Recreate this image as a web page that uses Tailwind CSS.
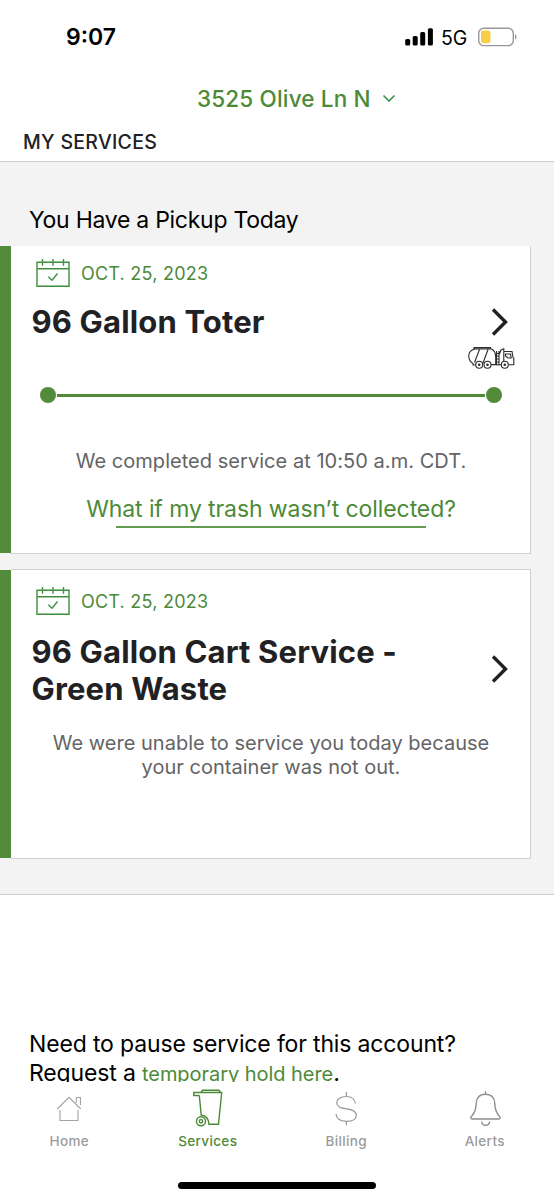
<!DOCTYPE html>
<html lang="en">
<head>
<meta charset="utf-8">
<title>My Services</title>
<script src="https://cdn.jsdelivr.net/npm/@tailwindcss/browser@4"></script>
</head>
<body class="bg-white font-['Inter','Roboto',sans-serif] text-black">
<svg class="hidden">
  <symbol id="calendar" viewBox="0 0 34 30">
    <g fill="none" stroke="#3f8f3f" stroke-width="1.4">
      <path d="M1 4.2H33V28.2H1ZM1 10.7H33M6.500 1V7.800M17 1V7.800M27.500 1V7.800"/>
      <path d="M12.300 18.800L16 22.300L21.500 15.500"/>
    </g>
  </symbol>
  <symbol id="chevron" viewBox="0 0 18 28">
    <path d="M2 1.500L14.500 14L2 26.500" fill="none" stroke="#212123" stroke-width="3.400"/>
  </symbol>
</svg>
<div class="flex h-[1200px] w-[554px] flex-col overflow-hidden">
  <header class="h-[162px] shrink-0 border-b border-[#cbccce]">
    <div class="flex h-[74px] items-center pl-[66px]">
      <span class="w-[339px] text-[23px] leading-[28px] font-semibold">9:07</span>
      <svg class="h-[18px] w-[28px]" viewBox="0 0 28 18"><rect x="0.200" y="11" width="5" height="6.500" rx="1.500"/><rect x="7.700" y="8" width="5" height="9.500" rx="1.500"/><rect x="15.200" y="4" width="5" height="13.500" rx="1.500"/><rect x="22.900" y="0.300" width="5" height="17.200" rx="1.500"/></svg>
      <span class="ml-[8px] w-[37px] pt-px text-[19.500px] leading-[28px]">5G</span>
      <svg class="h-[20px] w-[40px]" viewBox="0 0 40 20"><rect x="0.700" y="1.200" width="34.600" height="17.400" rx="5" fill="none" stroke="#98989c" stroke-width="1.400"/><rect x="3" y="3.500" width="9.500" height="12.800" rx="2.800" fill="#f7ce46"/><path d="M37 7.200C39 7.800 39 12 37 12.600Z" fill="#98989c"/></svg>
    </div>
    <div class="flex h-[49px] items-center pl-[197px] text-[22.500px] font-medium tracking-[0.16px] text-[#4c8a38]">
      <span>3525 Olive Ln N</span>
      <svg class="ml-[11px] h-[9px] w-[14px]" viewBox="0 0 14 9"><path d="M1.500 1.500L7 7L12.500 1.500" fill="none" stroke="#43924b" stroke-width="1.700"/></svg>
    </div>
    <h1 class="pt-[5px] pl-[23px] text-[19.500px] leading-[28px] font-medium tracking-[0.28px] text-[#212123]">MY SERVICES</h1>
  </header>

  <main class="h-[733px] shrink-0 border-b border-[#cbccce] bg-[#f3f3f3]">
    <h2 class="h-[84px] pt-[42px] pl-[29px] text-[23px] leading-[32px] tracking-[-0.27px]">You Have a Pickup Today</h2>
    <section class="flex h-[308px] w-[531px]">
      <div class="h-[307px] w-[11px] bg-[#538b3b]"></div>
      <div class="relative flex-1 border-r border-b border-[#cfd0d2] bg-white">
        <div class="flex h-[54px] items-center pl-[25px] text-[18px] tracking-[0.23px] text-[#4c8a38]">
          <svg class="mr-[11px] h-[30px] w-[34px]"><use href="#calendar"/></svg>OCT. 25, 2023
        </div>
        <div class="flex h-[44px] items-center justify-between pr-[21px] pl-[20.500px] text-[31px] leading-[38px] font-bold tracking-[0.16px] text-[#212123]">
          <h3>96 Gallon Toter</h3>
          <svg class="h-[28px] w-[18px]"><use href="#chevron"/></svg>
        </div>
        <svg class="absolute top-[99px] left-[456px] h-[26px] w-[50px]" viewBox="0 0 50 26" fill="none" stroke="#2b2b2b" stroke-width="1.100">
          <path d="M8 4C4 5 1.700 7.500 1.700 11C1.700 14.500 3.500 17 6 18.500V20H8.500M7 4V2.600H23.500V4M7 4H24.500C27.500 5.500 28.700 8.500 28.700 12V19.500H24M12.500 4.500L7.500 17.500M21 4.500L16 18M29.500 6V20.500M32 6V20.500M29.500 8.500H32M29.500 11H32M29.500 14H32M29.500 17H32M32.500 9L34 5L36.800 3.800V16M37 6.500H45L46 12.500L46.800 13V19.800H41.500M38.500 9H43.500L44.200 13H41L38.500 11ZM24 19.800H34"/>
          <g fill="white"><circle cx="12.200" cy="19.700" r="3.500"/><circle cx="20.500" cy="19.700" r="3.500"/><circle cx="37.800" cy="19.700" r="3.500"/></g>
          <g fill="#2b2b2b" stroke="none"><circle cx="12.200" cy="19.700" r="1.300"/><circle cx="20.500" cy="19.700" r="1.300"/><circle cx="37.800" cy="19.700" r="1.300"/></g>
        </svg>
        <div class="flex h-[102px] items-center pl-[29px]">
          <span class="size-4 rounded-full bg-[#538b3b]"></span><span class="ml-px h-[3px] w-[428px] bg-[#538b3b]"></span><span class="ml-px size-4 rounded-full bg-[#538b3b]"></span>
        </div>
        <p class="pl-px text-center text-[20px] leading-[30px] tracking-[0.04px] text-[#636466]">We completed service at 10:50 a.m. CDT.</p>
        <div class="flex flex-col items-center pt-[18px] pl-px text-[23px] leading-[31px] tracking-[-0.09px] text-[#4c8a38]">
          <a class="whitespace-nowrap">What if my trash wasn’t collected?</a>
          <span class="mt-px h-[2px] w-[310px] bg-[#629b51]"></span>
        </div>
      </div>
    </section>
    <section class="mt-[15px] flex h-[290px] w-[531px]">
      <div class="mt-px h-[288px] w-[11px] bg-[#538b3b]"></div>
      <div class="flex-1 border-y border-r border-[#cfd0d2] bg-white">
        <div class="flex h-[62px] items-center pl-[25px] text-[18px] tracking-[0.23px] text-[#4c8a38]">
          <svg class="mr-[11px] h-[30px] w-[34px]"><use href="#calendar"/></svg>OCT. 25, 2023
        </div>
        <div class="flex h-[76px] items-center justify-between pr-[21px] pl-[20.500px] text-[31px] leading-[37px] font-bold tracking-[0.16px] text-[#212123]">
          <h3>96 Gallon Cart Service -<br>Green Waste</h3>
          <svg class="mb-[2px] h-[28px] w-[18px]"><use href="#chevron"/></svg>
        </div>
        <p class="pt-[24px] pl-px text-center text-[20px] leading-[23.500px] tracking-[0.02px] text-[#636466]">We were unable to service you today because<br>your container was not out.</p>
      </div>
    </section>
  </main>

  <section class="h-[187px] shrink-0 overflow-hidden pt-[135px] pl-[29px] text-[23px] leading-[28.500px] tracking-[-0.15px]">
    <p>Need to pause service for this account?<br>Request a <a class="text-[20px] tracking-[-0.05px] text-[#4c8a38]">temporary hold here</a>.</p>
  </section>

  <nav class="grid h-[99px] shrink-0 grid-cols-4 text-center text-[13.500px] leading-[18px] font-medium tracking-[0.35px] text-[#9b9b9d]">
    <a class="flex flex-col items-center gap-[2px] pt-[4px]"><svg class="h-[44px] w-[40px]" viewBox="0 0 40 44" fill="none" stroke="#a3a3a5" stroke-width="1.100"><path d="M8.200 23L20 11.300L31.800 23M11 24V34.500H29V24M27.300 17V11.500H31.500V19"/></svg>Home</a>
    <a class="flex flex-col items-center gap-[2px] pt-[4px] text-[#4c8a38]"><svg class="h-[44px] w-[40px]" viewBox="0 0 40 44" fill="none" stroke="#4c8a38" stroke-width="1.400"><path d="M13 6.500L14.500 4.300H31L32.500 6.500M11.500 9.500H5.700V6.500H33.700L30.500 38.200H21C20.500 32.500 18 29.500 13.200 29L11.300 9.500"/><circle cx="13" cy="35.300" r="4.500"/><circle cx="13" cy="35.300" r="1.700"/></svg>Services</a>
    <a class="flex flex-col items-center gap-[2px] pt-[4px]"><svg class="h-[44px] w-[40px]" viewBox="0 0 40 44" fill="none" stroke="#98989a" stroke-width="1.200"><path d="M20.400 6V10.500M20.400 35.300V39.300M29.400 17.500C28.800 13 25.500 10.500 20.200 10.500C14.500 10.500 10.800 13.200 10.800 16.900C10.800 20.500 13.500 22 20.300 22.900C27.500 23.700 30.300 25.500 30.300 29.200C30.300 33 26.500 35.300 20.500 35.300C14.200 35.300 10.400 32.700 10 28"/></svg>Billing</a>
    <a class="flex flex-col items-center gap-[2px] pt-[4px]"><svg class="h-[44px] w-[40px]" viewBox="0 0 40 44" fill="none" stroke="#8e8e90" stroke-width="1.400"><path d="M20.500 5.300V8.200M20.500 8.200C14.500 8.200 11.300 12 11.200 17.500C11.100 24 10 26.500 6.800 30C5 31.800 5.500 33 7.500 33H33.500C35.500 33 36 31.800 34.200 30C31 26.500 29.900 24 29.800 17.500C29.700 12 26.500 8.200 20.500 8.200ZM16.700 35.500C17 40.500 24.300 40.500 24.600 35.500"/></svg>Alerts</a>
  </nav>
  <div class="mt-px ml-[178px] h-[7px] w-[198px] shrink-0 rounded-full bg-black"></div>
</div>
</body>
</html>
